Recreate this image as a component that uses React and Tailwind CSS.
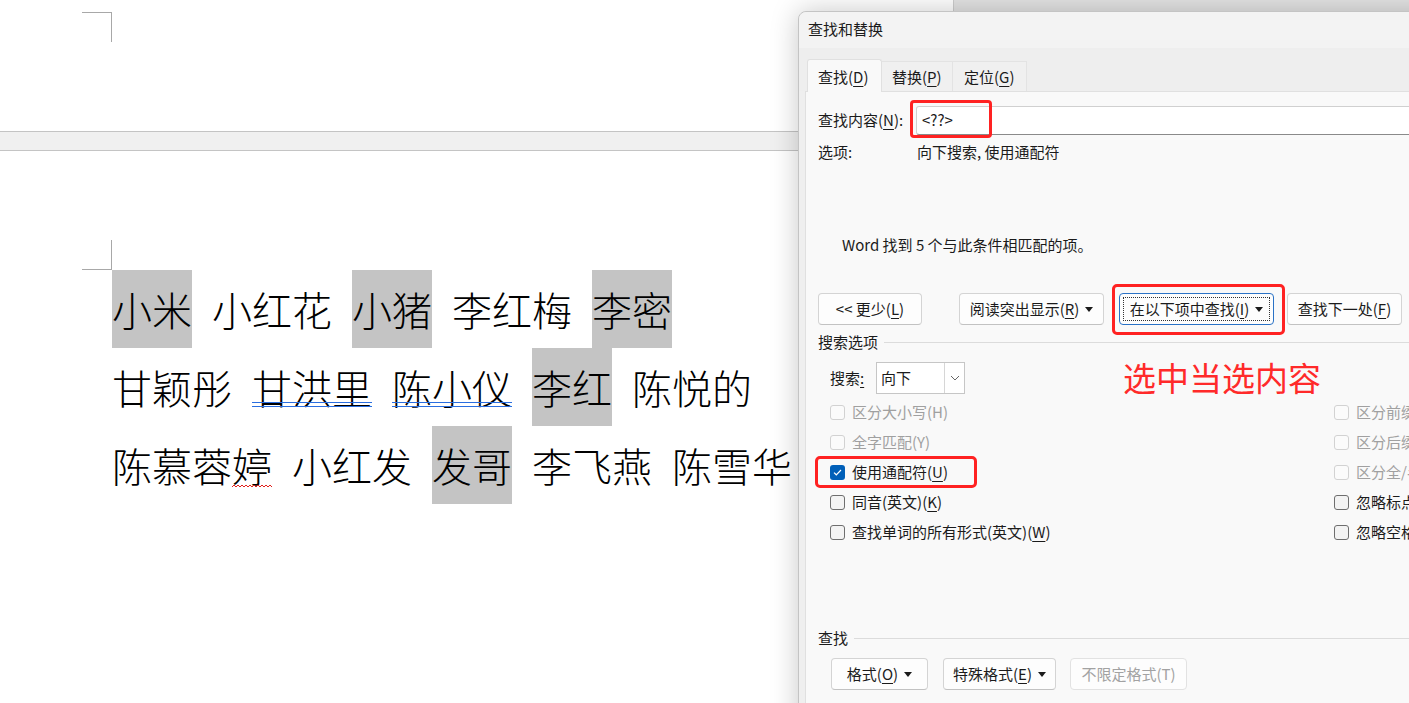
import React from 'react';

// --- document text ---

const lines = [
  [
    { t: '小米', hl: true },
    { t: '小红花' },
    { t: '小猪', hl: true },
    { t: '李红梅' },
    { t: '李密', hl: true },
  ],
  [
    { t: '甘颖彤' },
    { t: '甘洪里', dbl: true },
    { t: '陈小仪', dbl: true },
    { t: '李红', hl: true },
    { t: '陈悦的' },
  ],
  [
    { t: '陈慕蓉婷', wavy: true },
    { t: '小红发' },
    { t: '发哥', hl: true },
    { t: '李飞燕' },
    { t: '陈雪华' },
  ],
];

const Key = ({ children }) => (
  <span className="underline decoration-1 underline-offset-[3px]">{children}</span>
);

const Caret = () => (
  <svg width="8" height="5" viewBox="0 0 8 5" className="ml-[6px]">
    <path d="M0 0h8L4 5z" fill="#1b1b1b" />
  </svg>
);

const Btn = ({ w, children, disabled, focused, className = '' }) => (
  <div
    className={`relative flex h-[32px] items-center justify-center rounded-[4px] border bg-[#fdfdfd] text-[15px] ${
      focused ? 'border-[#2a72c6]' : disabled ? 'border-[#e2e2e2]' : 'border-[#d4d4d4] border-b-[#c2c2c2]'
    } ${disabled ? 'text-[#a2a2a2]' : 'text-[#1b1b1b]'} ${w} ${className}`}
  >
    {focused && <div className="absolute inset-[3px] border border-dotted border-[#333]" />}
    {children}
  </div>
);

const Check = ({ state, label, boxed }) => (
  <div className="relative flex h-[30px] items-center whitespace-nowrap">
    {state === 'on' ? (
      <div className="flex h-[15px] w-[15px] items-center justify-center rounded-[3px] bg-[#005fb8]">
        <svg width="9" height="7" viewBox="0 0 9 7">
          <path d="M1 3.6l2.3 2.2L8 1" stroke="#fff" strokeWidth="1.2" fill="none" />
        </svg>
      </div>
    ) : state === 'off' ? (
      <div className="h-[15px] w-[15px] rounded-[3px] border border-[#6e6e6e] bg-[#f3f3f3]" />
    ) : (
      <div className="h-[15px] w-[15px] rounded-[3px] border border-[#d2d2d2] bg-[#fbfbfb]" />
    )}
    <span className={`ml-[7px] text-[15px] ${state === 'dis' ? 'text-[#a0a0a0]' : 'text-[#1b1b1b]'}`}>
      {label}
    </span>
    {boxed && (
      <div className="absolute left-[-15px] top-[-1px] h-[32px] w-[162px] rounded-[5px] border-[3px] border-[#ff2222]" />
    )}
  </div>
);

function Dialog() {
  return (
    <div className="absolute left-[798px] top-[11px] flex h-[720px] w-[700px] flex-col rounded-t-[8px] border border-[#c4c4c4] bg-[#efefef] text-[#1b1b1b] shadow-[0_0_28px_rgba(0,0,0,0.22)]">
      {/* title bar */}
      <div className="flex h-[36px] items-center rounded-t-[8px] bg-[#f3f3f3] pb-[2px] pl-[9px] text-[15px]">
        查找和替换
      </div>

      {/* tabs */}
      <div className="flex h-[43px] items-end bg-[#eeeeee] pl-[8px] text-[15px]">
        <div className="relative z-10 mb-[-1px] flex h-[33px] w-[75px] items-center rounded-t-[3px] border-x border-t border-[#e0e0e0] bg-[#f9f9f9] pl-[10px] pt-[2px]">
          查找(<Key>D</Key>)
        </div>
        <div className="flex h-[30px] w-[71px] items-center border-r border-t border-[#e3e3e3] bg-[#f0f0f0] pl-[10px] pt-[2px]">
          替换(<Key>P</Key>)
        </div>
        <div className="flex h-[30px] w-[74px] items-center border-r border-t border-[#e3e3e3] bg-[#f0f0f0] pl-[11px] pt-[2px]">
          定位(<Key>G</Key>)
        </div>
      </div>

      {/* find tab page */}
      <div className="ml-[6px] flex-1 border-l border-t border-[#e0e0e0] bg-[#f9f9f9] pl-[12px] text-[15px]">
        <div className="mt-[14px] flex h-[29px] items-center">
          <span className="w-[98px]">
            查找内容(<Key>N</Key>):
          </span>
          <div className="relative flex h-[29px] flex-1 items-center rounded-[3px] border border-[#d0d0d0] border-b-[#8a8a8a] bg-white pl-[5px]">
            &lt;??&gt;
            <div className="absolute left-[-7px] top-[-7px] h-[38px] w-[82px] rounded-[4px] border-[3px] border-[#ff2222]" />
          </div>
        </div>

        <div className="mt-[8px] flex h-[18px] items-center">
          <span className="w-[99px]">选项:</span>
          <span>向下搜索, 使用通配符</span>
        </div>

        <div className="mt-[75px] flex h-[18px] items-center pl-[24px]">
          Word 找到 5 个与此条件相匹配的项。
        </div>

        <div className="mt-[39px] flex items-center">
          <Btn w="w-[104px]">
            &lt;&lt; 更少(<Key>L</Key>)
          </Btn>
          <Btn w="w-[145px]" className="ml-[37px]">
            阅读突出显示(<Key>R</Key>)
            <Caret />
          </Btn>
          <div className="relative ml-[15px]">
            <Btn w="w-[155px]" focused>
              在以下项中查找(<Key>I</Key>)
              <Caret />
            </Btn>
            <div className="absolute left-[-7px] top-[-9px] h-[51px] w-[173px] rounded-[5px] border-[3px] border-[#ff2222]" />
          </div>
          <Btn w="w-[115px]" className="ml-[13px]">
            查找下一处(<Key>F</Key>)
          </Btn>
        </div>

        <div className="mt-[8px] flex h-[18px] items-center">
          <span>搜索选项</span>
          <div className="ml-[6px] h-0 flex-1 border-t border-[#dcdcdc]" />
        </div>

        <div className="mt-[11px] flex h-[32px] items-center pl-[12px]">
          <span className="w-[46px]">
            搜索<Key>:</Key>
          </span>
          <div className="flex h-[32px] w-[89px] border border-[#c6c6c6] bg-white">
            <div className="flex w-[67px] items-center pl-[4px]">向下</div>
            <div className="flex flex-1 items-center justify-center border-l border-[#d6d6d6]">
              <svg width="10" height="6" viewBox="0 0 10 6">
                <path d="M1 1l4 4 4-4" stroke="#666" strokeWidth="1" fill="none" />
              </svg>
            </div>
          </div>
        </div>

        <div className="mt-[3px] grid grid-cols-[504px_auto] pl-[12px]">
          <div>
            <Check state="dis" label="区分大小写(H)" />
            <Check state="dis" label="全字匹配(Y)" />
            <Check state="on" boxed label={<>使用通配符(<Key>U</Key>)</>} />
            <Check state="off" label={<>同音(英文)(<Key>K</Key>)</>} />
            <Check state="off" label={<>查找单词的所有形式(英文)(<Key>W</Key>)</>} />
          </div>
          <div>
            <Check state="dis" label="区分前缀(X)" />
            <Check state="dis" label="区分后缀(T)" />
            <Check state="dis" label="区分全/半角(M)" />
            <Check state="off" label={<>忽略标点符号(<Key>S</Key>)</>} />
            <Check state="off" label={<>忽略空格(<Key>W</Key>)</>} />
          </div>
        </div>

        <div className="mt-[82px] flex h-[18px] items-center">
          <span>查找</span>
          <div className="ml-[6px] h-0 flex-1 border-t border-[#dcdcdc]" />
        </div>

        <div className="mt-[11px] flex items-center pl-[13px]">
          <Btn w="w-[97px]">
            格式(<Key>O</Key>)
            <Caret />
          </Btn>
          <Btn w="w-[113px]" className="ml-[15px]">
            特殊格式(<Key>E</Key>)
            <Caret />
          </Btn>
          <Btn w="w-[117px]" className="ml-[14px]" disabled>
            不限定格式(T)
          </Btn>
        </div>
      </div>

      {/* annotation */}
      <div className="absolute left-[324px] top-[345px] text-[33px] leading-[40px] text-[#ff2a2a]">
        选中当选内容
      </div>
    </div>
  );
}

export default function App() {
  return (
    <div className="relative h-[703px] w-full overflow-hidden bg-white font-['Noto_Sans_CJK_SC',sans-serif]">
      {/* end of previous page */}
      <div className="h-[131px] pl-[82px] pt-[12px]">
        <div className="h-[30px] w-[30px] border-r border-t border-[#a8a8a8]" />
      </div>
      <div className="h-[20px] border-y border-[#c4c4c4] bg-[#f0f0f0]" />

      {/* current page */}
      <div className="pt-[89px]">
        <div className="ml-[82px] h-[30px] w-[30px] border-b border-r border-[#a8a8a8]" />
        <div className="ml-[112px] text-[40px] font-light text-black">
          {lines.map((line, i) => (
            <div key={i} className="flex h-[78px] gap-[20px]">
              {line.map((w, j) => (
                <span
                  key={j}
                  className={`relative flex h-full items-center whitespace-nowrap leading-none ${w.hl ? 'bg-[#c4c4c4]' : ''}`}
                >
                  {w.t}
                  {w.dbl && (
                    <span className="absolute bottom-[19px] left-0 right-0 h-[5px] border-y-[1.5px] border-[#2a6ee0]" />
                  )}
                  {w.wavy && (
                    <svg className="absolute bottom-[16px] left-[120px]" width="42" height="4" viewBox="0 0 42 4">
                      <path
                        d="M0 3l2-2 2 2 2-2 2 2 2-2 2 2 2-2 2 2 2-2 2 2 2-2 2 2 2-2 2 2 2-2 2 2 2-2 2 2 2-2 2 2"
                        stroke="#e0201c"
                        strokeWidth="1"
                        fill="none"
                      />
                    </svg>
                  )}
                </span>
              ))}
            </div>
          ))}
        </div>
      </div>

      {/* window behind the dialog */}
      <div className="absolute left-[953px] right-0 top-0 h-[11px] border-l border-[#cdcdcd] bg-[#e3e3e3]" />

      <Dialog />
    </div>
  );
}
